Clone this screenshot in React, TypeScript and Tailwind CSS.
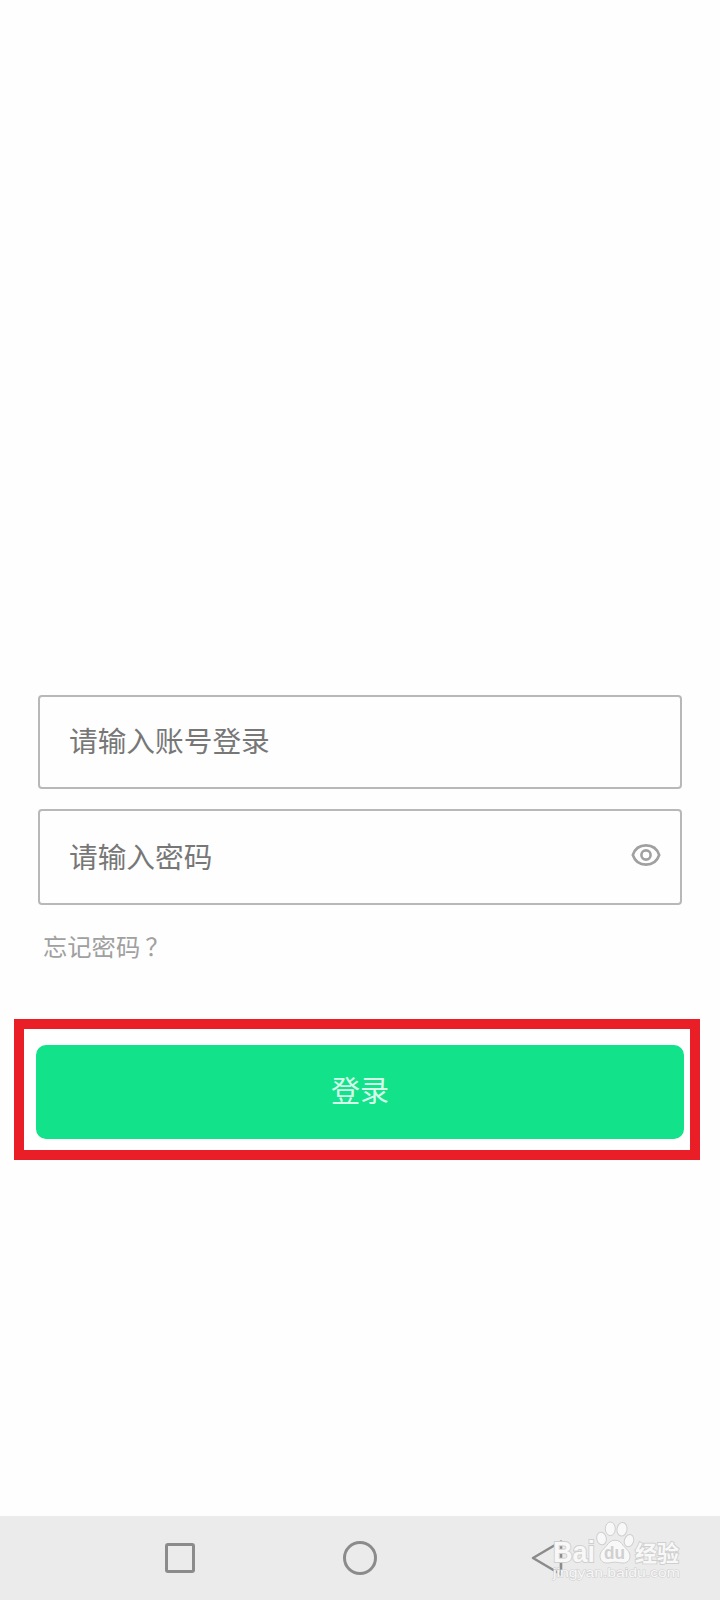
import { useState } from 'react';

const EyeIcon = () => (
  <svg width="30" height="24" viewBox="0 0 30 24" fill="none" stroke="#a0a0a0">
    <path d="M1.8 12C4 5.5 8.5 2.4 15 2.4S26 5.5 28.2 12C26 18.500 21.500 21.600 15 21.600S4 18.500 1.800 12Z" strokeWidth="2.6" strokeLinejoin="round" />
    <circle cx="15" cy="12" r="4.6" strokeWidth="2.6" />
  </svg>
);

const Watermark = () => (
  <svg
    className="absolute left-[548px] top-0 w-[140px] h-[84px]"
    viewBox="0 0 140 84"
    fill="#f8f8f8"
    stroke="#cfcfcf"
    strokeWidth="1"
  >
    <g transform="translate(20 0)">
      <ellipse cx="33.5" cy="22.5" rx="4.8" ry="6.4" transform="rotate(-12 33.5 22.5)" />
      <ellipse cx="42.3" cy="12.8" rx="5" ry="6.8" />
      <ellipse cx="54" cy="13.3" rx="5" ry="6.8" transform="rotate(8 54 13.3)" />
      <ellipse cx="61" cy="24.7" rx="4.6" ry="6.2" transform="rotate(18 61 24.7)" />
      <path d="M47 24.2c4 0 6 2.3 8.3 5.3 2.7 3.4 6.7 5.8 6.7 10.7 0 4.3-2.8 6.8-7 6.8-3.2 0-5-.8-8-.8s-4.8.8-8 .8c-4.2 0-7-2.5-7-6.8 0-4.9 4-7.3 6.7-10.7 2.3-3 4.3-5.3 8.3-5.3Z" />
    </g>
    <text
      x="5"
      y="46"
      fontSize="29"
      strokeWidth="2"
      textLength="42"
      lengthAdjust="spacingAndGlyphs"
      className="font-['Liberation_Sans',sans-serif] font-bold [paint-order:stroke]"
    >
      Bai
    </text>
    <text
      x="56"
      y="43"
      fontSize="19"
      fill="#d0d0d0"
      stroke="none"
      textLength="21"
      lengthAdjust="spacingAndGlyphs"
      className="font-['Liberation_Sans',sans-serif] font-bold"
    >
      du
    </text>
    <text
      x="87"
      y="44.5"
      fontSize="22"
      strokeWidth="1.8"
      className="font-['Noto_Sans_CJK_SC',sans-serif] font-bold [paint-order:stroke]"
    >
      经验
    </text>
    <text
      x="5"
      y="61"
      fontSize="13"
      strokeWidth="1"
      textLength="127"
      lengthAdjust="spacingAndGlyphs"
      className="font-['Liberation_Sans',sans-serif] [paint-order:stroke]"
    >
      jingyan.baidu.com
    </text>
  </svg>
);

const fieldClass =
  'w-full bg-transparent px-[29px] text-[28.7px] text-[#777777] placeholder:text-[#777777] placeholder:opacity-100 outline-none';

export default function App() {
  const [visible, setVisible] = useState(false);

  return (
    <div className="w-[720px] h-[1600px] flex flex-col bg-[#fefefe] overflow-hidden font-['Noto_Sans_CJK_SC',sans-serif]">
      <main className="flex-1 pt-[695px]">
        <form className="flex flex-col" onSubmit={(e) => e.preventDefault()}>
          <div className="mx-[38px] h-[94px] flex items-center border-2 border-[#b8b8b8] rounded-[4px]">
            <input type="text" placeholder="请输入账号登录" className={`${fieldClass} h-[88px] pb-1.5`} />
          </div>
          <div className="mx-[38px] mt-5 h-24 flex items-center border-2 border-[#b8b8b8] rounded-[4px]">
            <input
              type={visible ? 'text' : 'password'}
              placeholder="请输入密码"
              className={`${fieldClass} h-[88px] pb-1 flex-1 min-w-0`}
            />
            <button type="button" aria-label="显示密码" className="mr-[19px] mb-1" onClick={() => setVisible(!visible)}>
              <EyeIcon />
            </button>
          </div>
          <a className="ml-[43px] mt-[23px] h-9 leading-9 text-[24.3px] text-[#a0a0a0] self-start">
            忘记密码<span className="ml-[5px]">？</span>
          </a>
          <div className="ml-[14px] mt-[55px] w-[686px] h-[141px] border-10 border-[#ea1e26] bg-white pl-3 pt-4">
            <button type="submit" className="block w-[648px] h-[94px] pb-1 rounded-[10px] bg-[#12e28a] text-[#d8fcea] text-[29px]">
              登录
            </button>
          </div>
        </form>
      </main>

      <nav className="relative h-[84px] shrink-0 flex items-center bg-[#ebebeb] pl-[165px]">
        <div className="size-[30px] rounded-[3px] border-3 border-[#8b8b8b]" />
        <div className="ml-[148px] size-[34px] rounded-full border-3 border-[#8b8b8b]" />
        <svg className="ml-[154px]" width="34" height="38" viewBox="0 0 34 38" fill="none" stroke="#8b8b8b" strokeWidth="2.6" strokeLinejoin="round">
          <path d="M2 19L30 2.5V35.5Z" />
        </svg>
        <Watermark />
      </nav>
    </div>
  );
}
